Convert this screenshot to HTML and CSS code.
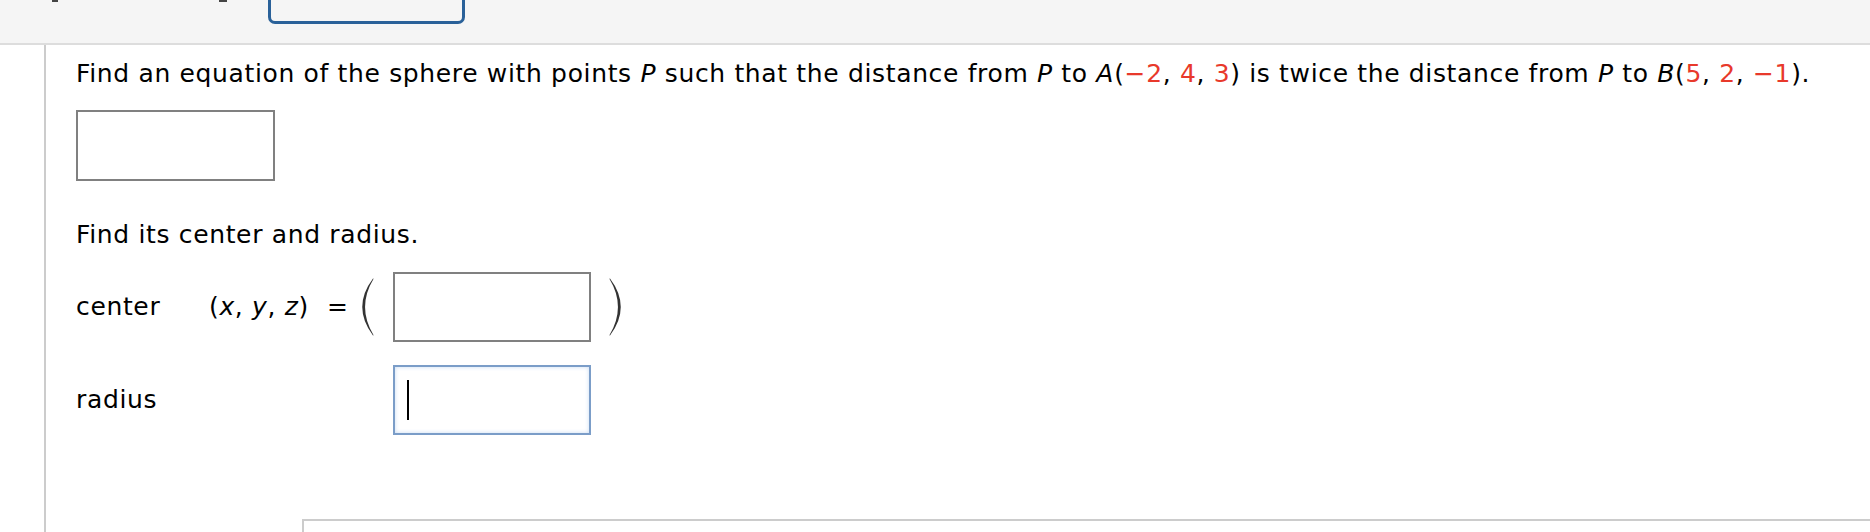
FILE: index.html
```html
<!DOCTYPE html>
<html>
<head>
<meta charset="utf-8">
<link rel="stylesheet" href="styles.css">
</head>
<body>
<div class="topbar">
  <span class="mark mark-left"></span>
  <span class="mark mark-right"></span>
  <span class="tab-box"></span>
</div>
<div class="main">
  <div class="content">
    <p class="question">Find an equation of the sphere with points <i>P</i> such that the distance from <i>P</i> to <i>A</i>(<span class="red">−2</span>, <span class="red">4</span>, <span class="red">3</span>) is twice the distance from <i>P</i> to <i>B</i>(<span class="red">5</span>, <span class="red">2</span>, <span class="red">−1</span>).</p>
    <div class="answer answer-eq"></div>
    <p class="question q2">Find its center and radius.</p>
    <div class="row row-center">
      <span class="label">center</span>
      <span class="expr">
        <span class="vars">(<i>x</i>, <i>y</i>, <i>z</i>)</span>
        <span class="eq">=</span>
        <svg class="paren" width="12" height="58" viewBox="0 0 12 58"><path d="M11 0.5 Q-10.5 29 11 57.5 L11.6 57.3 Q-5.5 29 11.6 0.7 Z" fill="#333"/></svg>
      </span>
      <span class="answer answer-row"></span>
      <svg class="paren paren-close" width="12" height="58" viewBox="0 0 12 58"><path d="M1 0.5 Q22.5 29 1 57.5 L0.4 57.3 Q17.5 29 0.4 0.7 Z" fill="#333"/></svg>
    </div>
    <div class="row row-radius">
      <span class="label">radius</span>
      <span class="expr"></span>
      <span class="answer answer-row answer-focus"><span class="caret"></span></span>
    </div>
  </div>
  <div class="next-box"></div>
</div>
</body>
</html>
```

FILE: styles.css
```css
html, body {
  margin: 0;
  padding: 0;
  overflow: hidden;
  background: #fff;
}
body {
  font-family: "DejaVu Sans", Verdana, sans-serif;
  font-size: 25px;
  line-height: 28px;
  letter-spacing: 0.65px;
  color: #000;
}
.topbar {
  height: 43px;
  background: #f5f5f5;
  border-bottom: 2px solid #dddddd;
  display: flex;
  align-items: flex-start;
  overflow: hidden;
}
.mark {
  display: block;
  height: 2px;
  background: #444;
}
.mark-left {
  width: 6px;
  margin-left: 52px;
}
.mark-right {
  width: 8px;
  margin-left: 161px;
}
.tab-box {
  display: block;
  width: 197px;
  height: 40px;
  margin-top: -16px;
  margin-left: 41px;
  box-sizing: border-box;
  border: 3px solid #2a6199;
  border-radius: 7px;
  background: #f5f5f5;
}
.main {
  margin-left: 44px;
  border-left: 2px solid #cccccc;
}
.content {
  padding: 15px 0 0 30px;
}
.question {
  margin: 0;
  white-space: nowrap;
}
.red {
  color: #e8392b;
}
.answer {
  display: block;
  box-sizing: border-box;
  border: 2px solid #808080;
  background: #fff;
}
.answer-eq {
  width: 199px;
  height: 71px;
  margin-top: 22px;
}
.q2 {
  margin-top: 40px;
}
.row {
  display: flex;
  align-items: center;
  margin-top: 23px;
}
.label {
  width: 133px;
  flex: none;
}
.expr {
  width: 184px;
  flex: none;
  display: flex;
  align-items: center;
}
.vars {
  white-space: nowrap;
}
.eq {
  margin-left: 18px;
}
.paren {
  display: block;
  margin-left: auto;
  margin-right: 19px;
}
.paren-close {
  margin-left: 18px;
  margin-right: 0;
}
.answer-row {
  width: 198px;
  height: 70px;
  flex: none;
}
.answer-focus {
  border-color: #7b9dc8;
  box-shadow: inset 0 0 4px #c9dbf2;
  padding: 13px 0 0 12px;
}
.caret {
  display: block;
  width: 2px;
  height: 40px;
  background: #000;
}
.next-box {
  margin-top: 84px;
  margin-left: 256px;
  height: 30px;
  border-top: 2px solid #cccccc;
  border-left: 2px solid #cccccc;
}
```
